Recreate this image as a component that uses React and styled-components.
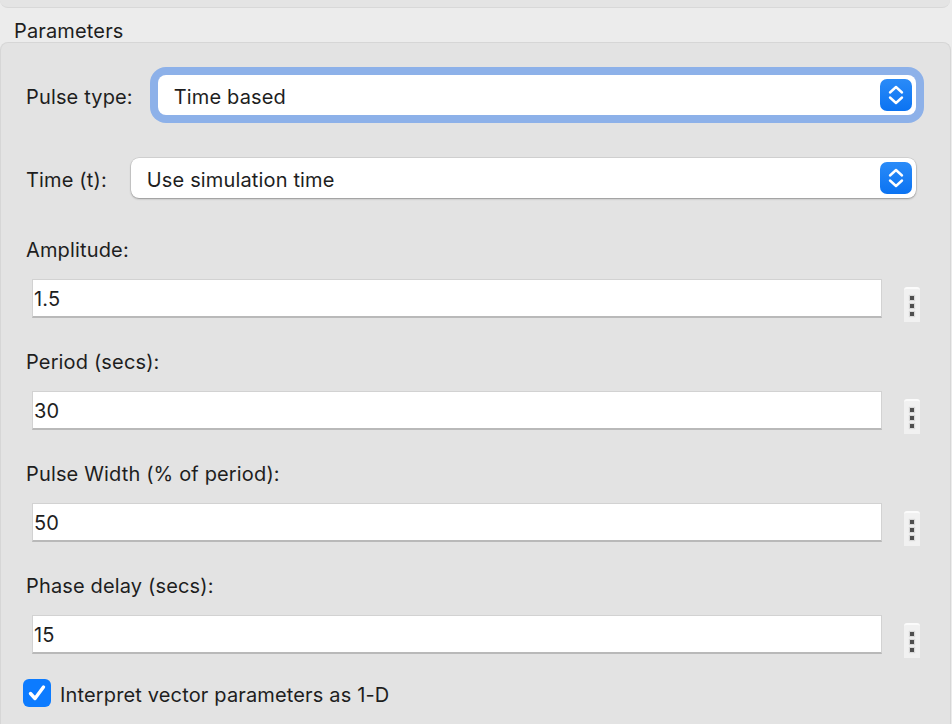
import React from "react";
import styled, { createGlobalStyle } from "styled-components";

const Global = createGlobalStyle`
  html, body {
    margin: 0;
    padding: 0;
    background: #ececec;
    font-family: Inter, "Noto Sans", "Liberation Sans", sans-serif;
    color: #1e1e1e;
    overflow: hidden;
  }
`;

const Page = styled.div`
  width: 952px;
  height: 724px;
  display: flex;
  flex-direction: column;
  overflow: hidden;
  font-size: 20px;
  letter-spacing: 0.15px;
`;

const TopStrip = styled.div`
  height: 7px;
  margin-right: 2px;
  background: #e4e4e4;
  border-bottom: 1px solid #d8d8d8;
  border-radius: 0 0 8px 8px;
`;

const Legend = styled.div`
  height: 34px;
  box-sizing: border-box;
  padding: 11px 0 0 14px;
  line-height: 24px;
`;

const Group = styled.div`
  flex: 1;
  margin-right: 1px;
  background: #e3e3e3;
  border: 1px solid #d6d6d6;
  border-bottom: none;
  border-radius: 8px 8px 0 0;
  padding: 32px 34px 0 25px;
  display: flex;
  flex-direction: column;
`;

const SelectRow = styled.div`
  display: flex;
  align-items: center;
  gap: ${(p) => p.$gap}px;
  margin-bottom: ${(p) => p.$after}px;
`;

const Label = styled.span`
  line-height: 24px;
  padding-top: 4px;
  white-space: nowrap;
`;

const Select = styled.div`
  flex: 1;
  height: 40px;
  box-sizing: border-box;
  background: #fff;
  border-radius: 8px;
  display: flex;
  align-items: center;
  padding: 0 4px 0 16px;
  box-shadow: ${(p) =>
    p.$focused
      ? "0 0 0 8px #8db1e9, 0 1px 2px rgba(0,0,0,0.25)"
      : "0 0 0 0.5px rgba(0,0,0,0.14), 0 1px 2px rgba(0,0,0,0.3)"};
`;

const SelectText = styled.span`
  flex: 1;
  padding-top: 4px;
`;

const Stepper = styled.div`
  width: 32px;
  height: 32px;
  border-radius: 7px;
  background: linear-gradient(#2a8bf8, #0b73f2);
  display: flex;
  align-items: center;
  justify-content: center;
`;

const Field = styled.div`
  display: flex;
  flex-direction: column;
  margin-bottom: 32px;
`;

const FieldLabel = styled.span`
  display: block;
  line-height: 24px;
  margin-bottom: 17px;
`;

const InputRow = styled.div`
  display: flex;
  align-items: flex-start;
  height: 39px;
  padding-left: 6px;
  gap: 22px;
`;

const Input = styled.div`
  flex: 1;
  height: 39px;
  box-sizing: border-box;
  background: #fff;
  border: 1px solid #d2d2d2;
  border-bottom: 2px solid #b9b9b9;
  display: flex;
  align-items: center;
  padding: 2px 0 0 1px;
`;

const MoreButton = styled.div`
  flex-shrink: 0;
  width: 16px;
  height: 35px;
  margin-top: 8px;
  margin-right: -4px;
  background: #f1f1f1;
  border-top: 2px solid #fbfbfb;
  border-radius: 3px 3px 0 0;
  box-sizing: border-box;
  display: flex;
  flex-direction: column;
  align-items: center;
  justify-content: center;
  gap: 4px;
`;

const Dot = styled.span`
  width: 4px;
  height: 4px;
  background: #4f4f4f;
  box-shadow: 0 0 1px 1px #d8d8d8;
`;

const CheckRow = styled.label`
  display: flex;
  align-items: center;
  gap: 9px;
  margin-top: -7px;
  margin-left: -3px;
  line-height: 24px;
`;

const CheckText = styled.span`
  padding-top: 4px;
`;

const CheckBox = styled.span`
  flex-shrink: 0;
  width: 28px;
  height: 28px;
  border-radius: 6px;
  background: #0c7bff;
  display: flex;
  align-items: center;
  justify-content: center;
`;

function Chevrons() {
  return (
    <svg width="16" height="20" viewBox="0 0 16 20">
      <path
        d="M2 7.5 L8 2 L14 7.5 M2 12.5 L8 18 L14 12.5"
        fill="none"
        stroke="#fff"
        strokeWidth="2.4"
        strokeLinecap="round"
        strokeLinejoin="round"
      />
    </svg>
  );
}

const fields = [
  { label: "Amplitude:", value: "1.5" },
  { label: "Period (secs):", value: "30" },
  { label: "Pulse Width (% of period):", value: "50" },
  { label: "Phase delay (secs):", value: "15" },
];

export default function App() {
  return (
    <Page>
      <Global />
      <TopStrip />
      <Legend>Parameters</Legend>
      <Group>
        <SelectRow $gap={25} $after={43}>
          <Label>Pulse type:</Label>
          <Select $focused>
            <SelectText>Time based</SelectText>
            <Stepper>
              <Chevrons />
            </Stepper>
          </Select>
        </SelectRow>
        <SelectRow $gap={24} $after={40}>
          <Label>Time (t):</Label>
          <Select>
            <SelectText>Use simulation time</SelectText>
            <Stepper>
              <Chevrons />
            </Stepper>
          </Select>
        </SelectRow>
        {fields.map((f) => (
          <Field key={f.label}>
            <FieldLabel>{f.label}</FieldLabel>
            <InputRow>
              <Input>{f.value}</Input>
              <MoreButton>
                <Dot />
                <Dot />
                <Dot />
              </MoreButton>
            </InputRow>
          </Field>
        ))}
        <CheckRow>
          <CheckBox>
            <svg width="20" height="20" viewBox="0 0 20 20">
              <path
                d="M3.5 10.5 L8 15.5 L16.5 4"
                fill="none"
                stroke="#fff"
                strokeWidth="3.4"
                strokeLinecap="round"
                strokeLinejoin="round"
              />
            </svg>
          </CheckBox>
          <CheckText>Interpret vector parameters as 1-D</CheckText>
        </CheckRow>
      </Group>
    </Page>
  );
}
